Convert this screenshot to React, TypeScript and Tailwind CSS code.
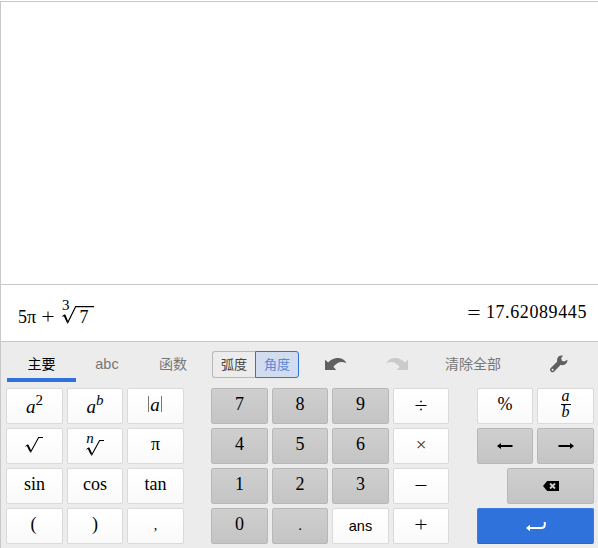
import type { ReactNode } from 'react';

const serif = "font-['Liberation_Serif','Noto_Sans_CJK_SC',serif]";
const sans = "font-['Liberation_Sans','Noto_Sans_CJK_SC',sans-serif]";

type Tone = 'light' | 'dark' | 'blue';
const tones: Record<Tone, string> = {
  light: 'border-[#dadada] bg-linear-to-b from-white to-[#fafafa] text-black',
  dark: 'border-[#b8b8b8] bg-linear-to-b from-[#cfcfcf] to-[#c4c4c4] text-black',
  blue: 'border-[#3f7ce0] border-b-[#2b66c5] bg-[#2f72dc] text-white',
};

function Key({ children, tone = 'light', className = '', size = 'text-[18px]' }: { children: ReactNode; tone?: Tone; className?: string; size?: string }) {
  return (
    <button className={`flex h-9 items-center justify-center rounded-[2px] border leading-none ${size} ${serif} ${tones[tone]} ${className}`}>
      {children}
    </button>
  );
}

function Radical({ bar = 4, tall = false }: { bar?: number; tall?: boolean }) {
  return (
    <svg width={14 + bar} height={tall ? 20 : 18} viewBox={`0 0 ${14 + bar} 18`} preserveAspectRatio="none" fill="none" stroke="black">
      <path d="M0.5 10.3 2.8 8.8" strokeWidth="1" />
      <path d="M2.5 9 5.4 15.2" strokeWidth="1.9" />
      <path d={`M5.4 16.5 13.6 1.5H${14 + bar}`} strokeWidth="1.1" />
    </svg>
  );
}

function Operator({ kind }: { kind: 'plus' | 'minus' | 'divide' | 'equals' }) {
  return (
    <svg width="12" height="12" viewBox="0 0 12 12" stroke="black" strokeWidth="1">
      {kind === 'equals' ? <path d="M.5 4.5h11M.5 8.5h11" /> : <path d="M.5 6.5h11" />}
      {kind === 'plus' && <path d="M6 1.5v10" />}
      {kind === 'divide' && <path d="M5.2 2.5h1.6M5.2 10.5h1.6" strokeWidth="1.5" />}
    </svg>
  );
}

function Undo({ className }: { className: string }) {
  return (
    <svg width="22" height="14" viewBox="0 0 22 14" className={className} fill="currentColor">
      <path d="M0 1.8 3.2 4.6C7.5-1.2 18-2.2 21.5 5.2 16.3 2.9 12.2 4 8.4 8.8L11.2 12H0Z" />
    </svg>
  );
}

function Arrow({ right = false }: { right?: boolean }) {
  return (
    <svg width="16" height="8" viewBox="0 0 16 8" className={right ? 'rotate-180' : ''} fill="black">
      <path d="M0 4 4 1v2h11.5v2H4v2Z" />
    </svg>
  );
}

function MainKeys() {
  return (
    <div className="grid grid-cols-[57px_56px_57px] gap-1">
      <Key className="italic"><span className="flex text-[19px]">a<span className="-mt-1 text-[15px] not-italic">2</span></span></Key>
      <Key className="italic"><span className="flex text-[19px]">a<span className="-mt-1 text-[15px]">b</span></span></Key>
      <Key><span className="flex items-center pr-px pb-1"><span className="h-4 w-px bg-[#777]" /><span className="px-px text-[19px] italic">a</span><span className="h-4 w-px bg-[#777]" /></span></Key>
      <Key className="pr-0.5 pb-0.5"><Radical /></Key>
      <Key><span className="flex"><span className="-mt-1 -mr-2 text-[15px] italic">n</span><span className="pt-1"><Radical /></span></span></Key>
      <Key className="pb-1">π</Key>
      <Key className="pb-1">sin</Key>
      <Key className="pb-1">cos</Key>
      <Key className="pb-1">tan</Key>
      <Key className="pr-0.5 pb-1">(</Key>
      <Key className="pb-1">)</Key>
      <Key size="text-[14px]">,</Key>
    </div>
  );
}

function NumberKeys() {
  const digit = (n: string) => <Key key={n} tone="dark" className="pb-1">{n}</Key>;
  return (
    <div className="grid grid-cols-[57px_56px_57px_56px] gap-1">
      {['7', '8', '9'].map(digit)}
      <Key className="pb-0.5"><Operator kind="divide" /></Key>
      {['4', '5', '6'].map(digit)}
      <Key className="pb-1" size="text-[19px]"><span className="text-[#333]">×</span></Key>
      {['1', '2', '3'].map(digit)}
      <Key className="pb-0.5"><Operator kind="minus" /></Key>
      {digit('0')}
      <Key tone="dark" size="text-[15px]" className="pb-0.5">.</Key>
      <Key><span className={`${sans} text-[14.5px]`}>ans</span></Key>
      <Key className="pb-1"><Operator kind="plus" /></Key>
    </div>
  );
}

function ActionKeys() {
  return (
    <div className="grid grid-cols-[26px_26px_57px] gap-1">
      <Key className="col-span-2 pb-1">%</Key>
      <Key><span className="flex flex-col items-center pb-1 italic"><span className="h-[13px] text-[16px] leading-[9px]">a</span><span className="h-px w-2.5 bg-black" /><span className="h-[13px] text-[16px] leading-[13px]">b</span></span></Key>
      <Key tone="dark" className="col-span-2"><Arrow /></Key>
      <Key tone="dark"><Arrow right /></Key>
      <span />
      <Key tone="dark" className="col-span-2">
        <svg width="16" height="10" viewBox="0 0 16 10"><path d="M0 5 4.2 0H16v10H4.2Z" /><path d="m7 2.5 5 5m0-5-5 5" stroke="#d0d0d0" strokeWidth="1.8" /></svg>
      </Key>
      <Key tone="blue" className="col-span-3 pt-px">
        <svg width="20" height="11" viewBox="0 0 20 11" fill="none"><path d="M3 7h12q3.8 0 3.8-3.5V1" stroke="white" strokeWidth="2" /><path d="M0 7 4 3.8v6.4Z" fill="white" /></svg>
      </Key>
    </div>
  );
}

export default function App() {
  return (
    <div className={`h-[548px] w-[598px] overflow-hidden bg-white pt-px ${sans}`}>
      <div className="flex h-[547px] flex-col border-t border-l border-[#c8c8c8]">
        <div className="h-[282px]" />
        <div className={`flex h-[58px] justify-between border-y border-[#c8c8c8] pr-[11px] pl-[17px] text-[18px] leading-none ${serif}`}>
          <div className="flex pt-[22px]">
            <span className="pt-px">5π</span>
            <span className="ml-1.5 pt-[3px]"><Operator kind="plus" /></span>
            <span className="-mt-[9px] ml-2 text-[15px]">3</span>
            <span className="-mt-0.5 -ml-2"><Radical bar={18} tall /></span>
            <span className="-ml-[14px] pt-px">7</span>
          </div>
          <div className="flex pt-[18px] tracking-[0.6px]">
            <span className="mr-1.5 pt-[3px]"><Operator kind="equals" /></span>17.62089445
          </div>
        </div>
        <div className="grow bg-[#ececec] pl-[5px]">
          <div className="flex h-10 text-[14px] text-[#777]">
            <div className="ml-px flex h-full w-[69px] items-center justify-center border-b-4 border-[#2f72dc] pt-2 text-black">主要</div>
            <div className="flex w-[62px] items-center justify-center pt-1.5 text-[14.5px]">abc</div>
            <div className="flex w-[70px] items-center justify-center pt-1">函数</div>
            <div className="mt-[9px] ml-1 flex h-[27px] w-[87px] text-[13px]">
              <div className="flex w-[43px] items-center justify-center rounded-l-[3px] border border-r-0 border-[#b8b8b8] text-[#444]">弧度</div>
              <div className="flex w-11 items-center justify-center rounded-r-[3px] border border-[#2f72dc] bg-[#d2dcef] text-[#5d86d7]">角度</div>
            </div>
            <div className="ml-[26px] pt-4"><Undo className="text-[#606060]" /></div>
            <div className="ml-[39px] pt-4"><Undo className="-scale-x-100 text-[#cacaca]" /></div>
            <div className="ml-[37px] flex items-center pt-1">清除全部</div>
            <svg className="mt-[13px] ml-[49px]" width="18" height="18" viewBox="0 0 18 18">
              <path d="M17.4 4.8c.4 4-3.5 6.2-6.7 5L4.3 16.4a2.4 2.4 0 0 1-3.5-3.4l6.5-6.4C6.2 3.1 8.6-.2 13 .5L11.2 3.2l.6 2.6 2.6.6Z" fill="#606060" /><circle cx="2.6" cy="14.7" r="1" fill="#ececec" />
            </svg>
          </div>
          <div className="flex pt-1.5">
            <MainKeys />
            <div className="ml-[27px]"><NumberKeys /></div>
            <div className="ml-7"><ActionKeys /></div>
          </div>
        </div>
      </div>
    </div>
  );
}
